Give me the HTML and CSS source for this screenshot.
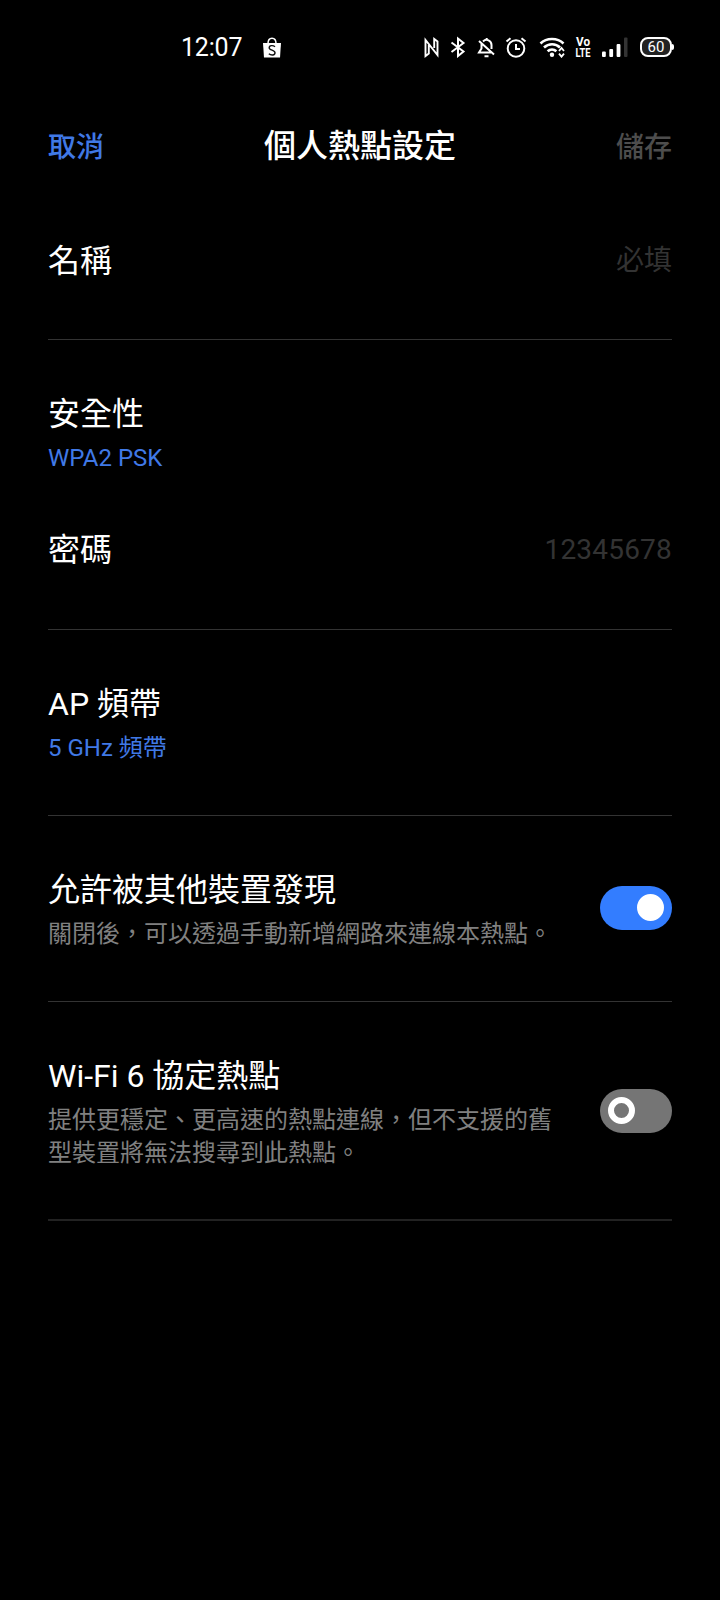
FILE: index.html
```html
<!DOCTYPE html>
<html lang="zh-Hant">
<head>
<meta charset="utf-8">
<title>個人熱點設定</title>
<link rel="stylesheet" href="styles.css">
</head>
<body>
<div class="status">
  <div class="status-left">
    <span class="clock">12:07</span>
    <svg class="shop" width="20" height="22" viewBox="0 0 20 22"><path d="M1 7h18l-1 14.500H2z" fill="#fff"/><path d="M6 7.500C6 .5 14 .5 14 7.500" fill="none" stroke="#fff" stroke-width="1.500"/><path d="M13 10.700C11 9 7.200 9.300 7.200 11.700c0 3 5.800 1.900 5.800 5 0 2.700-3.900 3-6.200 1" fill="none" stroke="#111" stroke-width="1.400"/></svg>
  </div>
  <div class="status-right">
    <svg width="15" height="22" viewBox="0 0 15 22" fill="none" stroke="#fff" stroke-width="1.900"><path d="M4.800 9v8.500L1.500 20V4L13.500 19V5.500L10.200 3v9"/></svg>
    <svg class="bt" width="16" height="22" viewBox="0 0 16 22" fill="none" stroke="#fff" stroke-width="2"><path d="M1.500 6.500l12 9-5.500 4.500V2.500L13.500 7l-12 9"/></svg>
    <svg class="bell" width="19" height="22" viewBox="0 0 19 22" fill="none" stroke="#fff" stroke-width="2"><path d="M6 5.500c3.500-3.500 8.500-.8 8.500 3.500v4M4.500 8v4.500L2 16.500h12M2 5l15 13.500M7.500 20.200h4M9.700 4.500V2"/></svg>
    <svg class="alarm" width="22" height="22" viewBox="0 0 22 22" fill="none" stroke="#fff" stroke-width="2"><circle cx="11" cy="12.500" r="8.300"/><path d="M11 8v5h4M1.500 5.500l4-3.300M20.500 5.500l-4-3.300"/></svg>
    <svg class="wifi" width="28" height="22" viewBox="0 0 28 22" fill="none" stroke="#fff" stroke-width="2.600"><path d="M1.500 7.500c6-6 17-6 23 0M5 11.500c4.500-4.300 11.700-4.300 16 0M8.600 15.300c2.500-2.300 6.300-2.300 8.800 0"/><circle cx="13" cy="18.700" r="2.200" fill="#fff" stroke="none"/><path d="M20 15l2.500-3 2.500 3M20 17.700l2.500 3 2.500-3" stroke-width="1.800"/></svg>
    <svg class="volte" width="16" height="22" viewBox="0 0 16 22"><text x="1" y="10" textLength="14" lengthAdjust="spacingAndGlyphs">Vo</text><text x="0.500" y="20.700" textLength="15" lengthAdjust="spacingAndGlyphs">LTE</text></svg>
    <svg class="signal" width="26" height="22" viewBox="0 0 26 22" fill="#fff"><rect x="0" y="15.500" width="3.800" height="5.500" rx="1"/><rect x="7.300" y="13" width="3.800" height="8" rx="1"/><rect x="14.600" y="8" width="3.800" height="13" rx="1"/><rect x="22" y="1.500" width="3.500" height="19.500" rx="1" fill="#333"/></svg>
    <span class="battery">60</span>
  </div>
</div>

<header class="header">
  <span class="cancel">取消</span>
  <h1 class="title">個人熱點設定</h1>
  <span class="save">儲存</span>
</header>

<main class="list">
  <section class="row name">
    <div class="label">名稱</div>
    <div class="hint">必填</div>
  </section>
  <section class="group">
    <div class="row security">
      <div class="text"><div class="label">安全性</div><div class="sub link">WPA2 PSK</div></div>
    </div>
    <div class="row password">
      <div class="label">密碼</div>
      <div class="hint digits">12345678</div>
    </div>
  </section>
  <section class="row item">
    <div class="text"><div class="label">AP 頻帶</div><div class="sub link">5 GHz 頻帶</div></div>
  </section>
  <section class="row item">
    <div class="text"><div class="label">允許被其他裝置發現</div><div class="sub">關閉後，可以透過手動新增網路來連線本熱點。</div></div>
    <div class="toggle on"><div class="knob"></div></div>
  </section>
  <section class="row item last">
    <div class="text"><div class="label">Wi-Fi 6 協定熱點</div><div class="sub">提供更穩定、更高速的熱點連線，但不支援的舊型裝置將無法搜尋到此熱點。</div></div>
    <div class="toggle"><div class="knob"></div></div>
  </section>
</main>
</body>
</html>
```
FILE: styles.css
```css
* { box-sizing: border-box; }
body {
  margin: 0;
  min-height: 1600px;
  background: #000;
  color: #fff;
  font-family: Roboto, "Noto Sans CJK TC", sans-serif;
}
svg { display: block; flex: none; }
.status {
  display: flex;
  justify-content: space-between;
  height: 111px;
  padding: 36px 46px 0 181px;
}
.status-left, .status-right { display: flex; align-items: center; height: 22px; }
.clock { padding-top: 2px; font-size: 25px; line-height: 22px; width: 63px; letter-spacing: -0.2px; }
.shop { margin-left: 18px; }
.bt { margin-left: 11px; }
.bell { margin-left: 11px; }
.alarm { margin-left: 9px; }
.wifi { margin-left: 12px; }
.volte {
  overflow: visible;
  margin-left: 8px;
  fill: #fff;
  font: 700 13px Roboto, sans-serif;
}
.signal { margin-left: 11px; }
.battery {
  position: relative;
  width: 32px;
  height: 20px;
  margin: 0 2px 0 12px;
  border: 2px solid #fff;
  border-radius: 8px;
  background: #222;
  font-size: 15px;
  line-height: 17px;
  text-align: center;
}
.battery::after {
  content: "";
  position: absolute;
  right: -4px;
  top: 5px;
  width: 2px;
  height: 6px;
  background: #fff;
  border-radius: 0 2px 2px 0;
}
.header {
  display: grid;
  grid-template-columns: 1fr auto 1fr;
  align-items: center;
  height: 68px;
  padding: 0 48px;
  font-size: 28px;
  font-weight: 500;
}
.title { margin: 0; padding-bottom: 4px; font-size: 32px; font-weight: 500; }
.cancel { color: #4079e6; }
.save { color: #4d4d4d; text-align: right; }
.list { padding: 0 48px; }
.row { display: flex; align-items: center; justify-content: space-between; }
.name { height: 161px; padding-top: 3px; }
.name, .group, .item { border-bottom: 1px solid #333; }
.label { font-size: 32px; line-height: 44px; }
.hint { font-size: 28px; line-height: 40px; color: #333; }
.digits { letter-spacing: 0.2px; }
.sub { margin-top: 6px; font-size: 24px; line-height: 33px; color: #808080; }
.link { color: #4079e6; }
.security { padding-top: 52px; }
.password { height: 154px; padding-bottom: 4px; }
.item { padding: 52px 0 50px; }
.last { padding-bottom: 49px; border-bottom: 2px solid #222; }
.text { width: 506px; }
.toggle {
  display: flex;
  align-items: center;
  width: 72px;
  height: 44px;
  margin-bottom: 4px;
  padding: 0 8px;
  border-radius: 22px;
  background: #757575;
}
.last .toggle { margin-bottom: 3px; }
.knob { width: 27px; height: 27px; border: 6px solid #fff; border-radius: 50%; }
.on { justify-content: flex-end; background: #337dff; }
.on .knob { background: #fff; }
```
